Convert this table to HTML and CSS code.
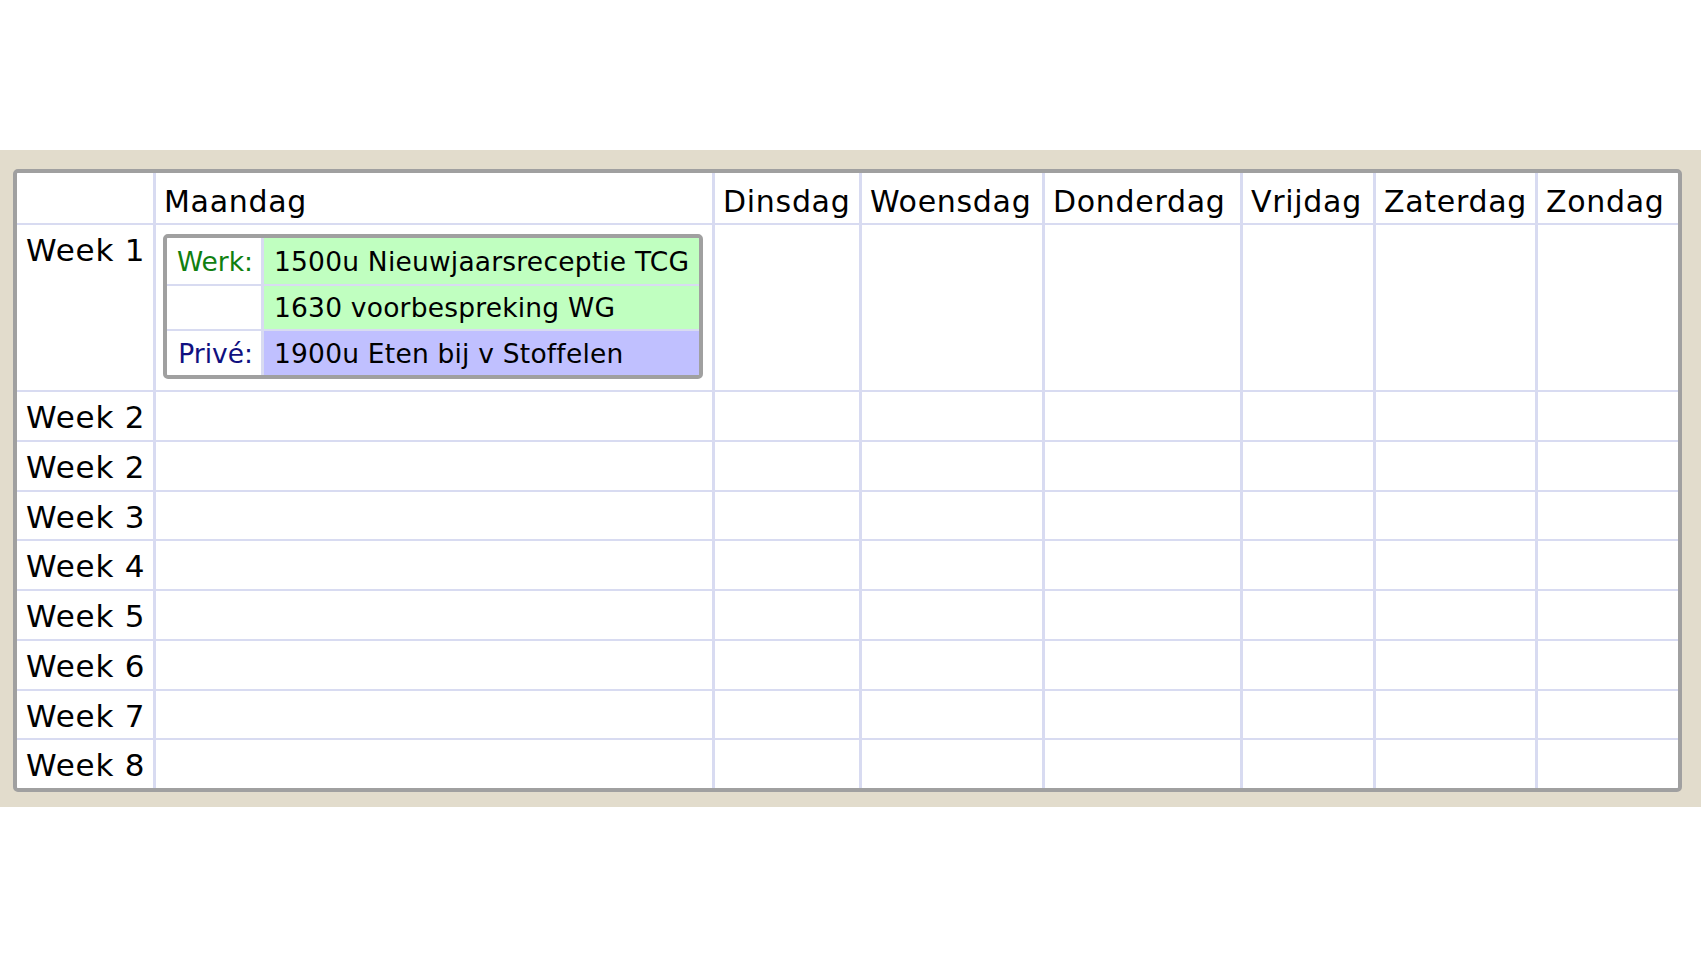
FILE: index.html
```html
<!DOCTYPE html>
<html lang="nl">
<head>
<meta charset="utf-8">
<title>Kalender</title>
<link rel="stylesheet" href="styles.css">
</head>
<body>
<div class="band">
  <div class="cal">
    <div class="cell corner"></div>
    <div class="cell head">Maandag</div>
    <div class="cell head">Dinsdag</div>
    <div class="cell head">Woensdag</div>
    <div class="cell head">Donderdag</div>
    <div class="cell head">Vrijdag</div>
    <div class="cell head">Zaterdag</div>
    <div class="cell head">Zondag</div>

    <div class="cell week">Week 1</div>
    <div class="cell day first">
      <div class="events">
        <div class="lbl werk">Werk:</div>
        <div class="ev werk-ev">1500u Nieuwjaarsreceptie TCG</div>
        <div class="lbl"></div>
        <div class="ev werk-ev">1630 voorbespreking WG</div>
        <div class="lbl prive">Privé:</div>
        <div class="ev prive-ev">1900u Eten bij v Stoffelen</div>
      </div>
    </div>
    <div class="cell"></div><div class="cell"></div><div class="cell"></div><div class="cell"></div><div class="cell"></div><div class="cell"></div>

    <div class="cell week">Week 2</div>
    <div class="cell"></div><div class="cell"></div><div class="cell"></div><div class="cell"></div><div class="cell"></div><div class="cell"></div><div class="cell"></div>

    <div class="cell week">Week 2</div>
    <div class="cell"></div><div class="cell"></div><div class="cell"></div><div class="cell"></div><div class="cell"></div><div class="cell"></div><div class="cell"></div>

    <div class="cell week">Week 3</div>
    <div class="cell"></div><div class="cell"></div><div class="cell"></div><div class="cell"></div><div class="cell"></div><div class="cell"></div><div class="cell"></div>

    <div class="cell week">Week 4</div>
    <div class="cell"></div><div class="cell"></div><div class="cell"></div><div class="cell"></div><div class="cell"></div><div class="cell"></div><div class="cell"></div>

    <div class="cell week">Week 5</div>
    <div class="cell"></div><div class="cell"></div><div class="cell"></div><div class="cell"></div><div class="cell"></div><div class="cell"></div><div class="cell"></div>

    <div class="cell week">Week 6</div>
    <div class="cell"></div><div class="cell"></div><div class="cell"></div><div class="cell"></div><div class="cell"></div><div class="cell"></div><div class="cell"></div>

    <div class="cell week">Week 7</div>
    <div class="cell"></div><div class="cell"></div><div class="cell"></div><div class="cell"></div><div class="cell"></div><div class="cell"></div><div class="cell"></div>

    <div class="cell week">Week 8</div>
    <div class="cell"></div><div class="cell"></div><div class="cell"></div><div class="cell"></div><div class="cell"></div><div class="cell"></div><div class="cell"></div>
  </div>
</div>
</body>
</html>
```

FILE: styles.css
```css
html, body {
  margin: 0;
  padding: 0;
  background: #ffffff;
}

body {
  font-family: "DejaVu Sans", Verdana, sans-serif;
  color: #000000;
}

.band {
  margin-top: 150px;
  height: 657px;
  box-sizing: border-box;
  padding: 19px 19px 15px 13px;
  background: #e2dccc;
}

.cal {
  box-sizing: border-box;
  width: 1669px;
  height: 623px;
  border: 4px solid #a0a0a0;
  border-radius: 5px;
  overflow: hidden;
  background: #d8dbf1;
  display: grid;
  grid-template-columns: 136px 556px 144px 180px 195px 130px 159px 140px;
  grid-template-rows: 50px 165px repeat(8, 1fr);
  column-gap: 3px;
  row-gap: 2px;
}

.cell {
  background: #ffffff;
  min-width: 0;
}

.head {
  font-size: 30px;
  letter-spacing: 0.7px;
  padding: 11px 0 0 8px;
  white-space: nowrap;
}

.week {
  font-size: 31px;
  letter-spacing: 0.8px;
  padding: 7px 0 0 9px;
  white-space: nowrap;
}

.first {
  padding: 9px 0 0 7px;
}

.events {
  box-sizing: border-box;
  width: 540px;
  height: 145px;
  border: 4px solid #a0a0a0;
  border-radius: 5px;
  overflow: hidden;
  background: #d8dbf1;
  display: grid;
  grid-template-columns: 94px 435px;
  grid-template-rows: 46px 43px 44px;
  column-gap: 3px;
  row-gap: 2px;
  font-size: 26.5px;
}

.lbl {
  background: #ffffff;
  display: flex;
  align-items: center;
  justify-content: flex-end;
  padding-right: 8px;
}

.werk {
  color: #108010;
}

.prive {
  color: #101080;
}

.ev {
  display: flex;
  align-items: center;
  padding-left: 10px;
  letter-spacing: 0.2px;
  white-space: nowrap;
}

.werk-ev {
  background: #c0ffc0;
}

.prive-ev {
  background: #c0c0ff;
}
```
